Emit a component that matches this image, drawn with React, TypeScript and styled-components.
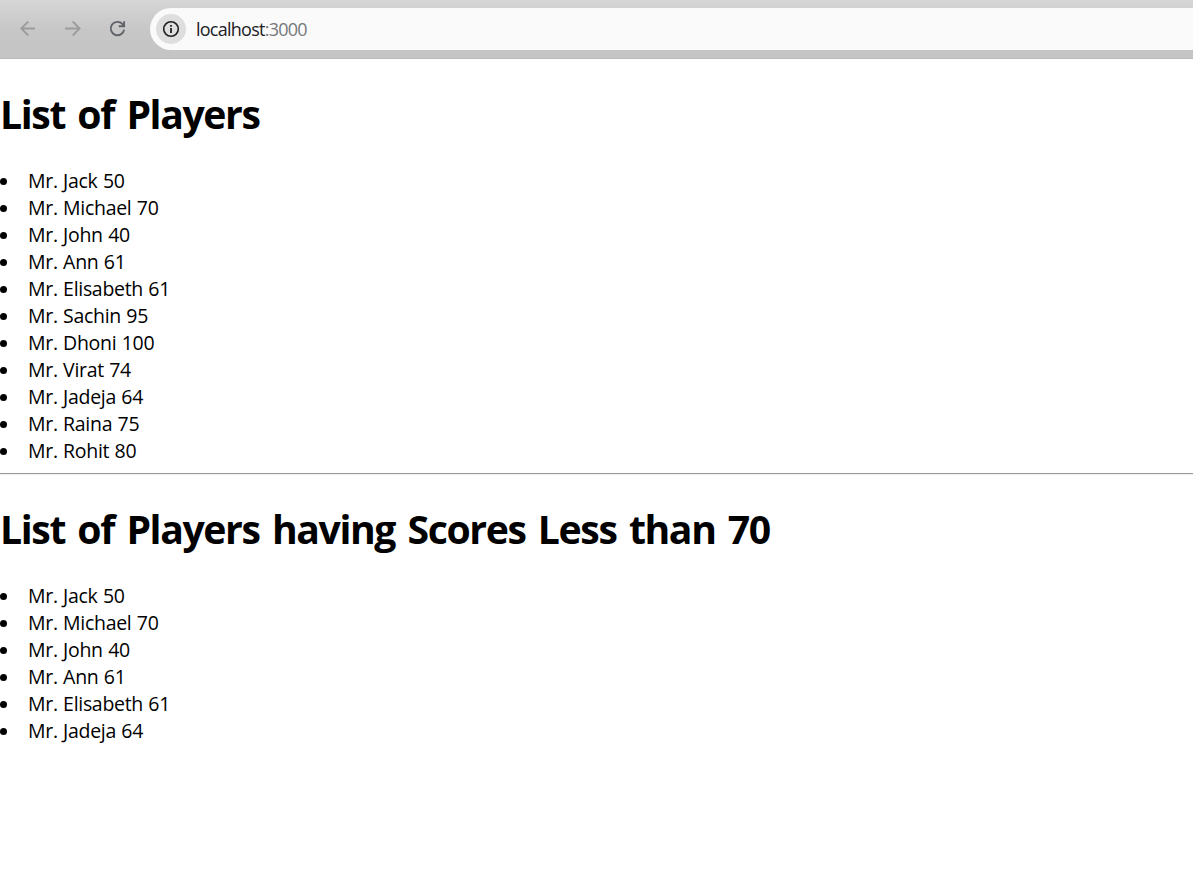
import React from 'react';
import styled, { createGlobalStyle } from 'styled-components';

const GlobalStyle = createGlobalStyle`
  body {
    margin: 0;
    background: #fff;
    color: #000;
    font-family: 'Open Sans', 'Noto Sans', sans-serif;
  }
`;

const Window = styled.div`
  height: 882px;
  overflow: hidden;
`;

const Toolbar = styled.header`
  box-sizing: border-box;
  display: flex;
  align-items: center;
  height: 59px;
  padding: 0 0 1px 18px;
  background: linear-gradient(#d6d6d6, #c7c7c7 50%, #c4c4c4);
  border-bottom: 1px solid #bababa;
`;

const NavButton = styled.span<{ $active?: boolean }>`
  display: flex;
  width: 20px;
  height: 20px;
  margin-right: 25px;
  color: ${({ $active }) => ($active ? '#5f6368' : '#9b9c9d')};
`;

const AddressBar = styled.div`
  display: flex;
  flex: 1;
  align-items: center;
  box-sizing: border-box;
  height: 42px;
  margin-left: -3px;
  padding-left: 6px;
  border-radius: 21px 0 0 21px;
  background: #fafafa;
`;

const InfoBadge = styled.span`
  display: flex;
  align-items: center;
  justify-content: center;
  width: 30px;
  height: 30px;
  margin-right: 10px;
  border-radius: 50%;
  background: #dedede;
`;

const Address = styled.span`
  font-size: 18px;
  line-height: 24px;
  letter-spacing: -0.75px;
  color: #202124;
`;

const Port = styled.span`
  color: #76787b;
`;

const Title = styled.h1`
  margin: 0;
  padding: 28px 0 28px;
  font-size: 39.2px;
  font-weight: 700;
  line-height: 53px;
  letter-spacing: -1.4px;
  word-spacing: 3.6px;
  white-space: nowrap;
`;

const List = styled.ul`
  margin: 0;
  padding: 0;
  list-style: none;
`;

const Player = styled.li`
  display: flex;
  align-items: center;
  height: 27px;
  font-size: 19.5px;
  line-height: 25px;
  letter-spacing: -0.3px;
  word-spacing: 0.6px;
  white-space: nowrap;

  &::before {
    content: '';
    width: 7px;
    height: 7px;
    margin-right: 21px;
    border-radius: 50%;
    background: #000;
  }
`;

const PlayerText = styled.span`
  padding-bottom: 2px;
`;

const Divider = styled.hr`
  margin: 8px 0 -1px;
  border: 0;
  border-top: 1px solid #9a9a9a;
  border-bottom: 1px solid #eee;
`;

type Score = { name: string; score: number };

const players: Score[] = [
  { name: 'Jack', score: 50 },
  { name: 'Michael', score: 70 },
  { name: 'John', score: 40 },
  { name: 'Ann', score: 61 },
  { name: 'Elisabeth', score: 61 },
  { name: 'Sachin', score: 95 },
  { name: 'Dhoni', score: 100 },
  { name: 'Virat', score: 74 },
  { name: 'Jadeja', score: 64 },
  { name: 'Raina', score: 75 },
  { name: 'Rohit', score: 80 },
];

const PlayerList = ({ items }: { items: Score[] }) => (
  <List>
    {items.map(({ name, score }) => (
      <Player key={name}>
        <PlayerText>{`Mr. ${name} ${score}`}</PlayerText>
      </Player>
    ))}
  </List>
);

const Arrow = ({ forward }: { forward?: boolean }) => (
  <svg width="20" height="20" viewBox="0 0 20 20" fill="none" stroke="currentColor" strokeWidth="1.8">
    <path d={forward ? 'M2 9.5H16.5M9.7 2.5L16.7 9.5L9.7 16.5' : 'M17 9.5H3.5M10.3 2.5L3.3 9.5L10.3 16.5'} />
  </svg>
);

const Reload = () => (
  <svg width="20" height="20" viewBox="0 0 20 20" fill="none" stroke="currentColor" strokeWidth="1.9">
    <path d="M16.1 10.6A6.7 6.7 0 1 1 14.3 4.9L16 7" />
    <path d="M16.1 2.2V7.2H10.8" />
  </svg>
);

const Info = () => (
  <svg width="18" height="18" viewBox="0 0 18 18" fill="none" stroke="#202124">
    <circle cx="9" cy="9" r="7.3" strokeWidth="1.6" />
    <path d="M9 8V13M9 5V6.8" strokeWidth="1.8" />
  </svg>
);

export default function App() {
  return (
    <Window>
      <GlobalStyle />
      <Toolbar>
        <NavButton><Arrow /></NavButton>
        <NavButton><Arrow forward /></NavButton>
        <NavButton $active><Reload /></NavButton>
        <AddressBar>
          <InfoBadge><Info /></InfoBadge>
          <Address>localhost<Port>:3000</Port></Address>
        </AddressBar>
      </Toolbar>
      <main>
        <Title>List of Players</Title>
        <PlayerList items={players} />
        <Divider />
        <Title>List of Players having Scores Less than 70</Title>
        <PlayerList items={players.filter(({ score }) => score < 71)} />
      </main>
    </Window>
  );
}
